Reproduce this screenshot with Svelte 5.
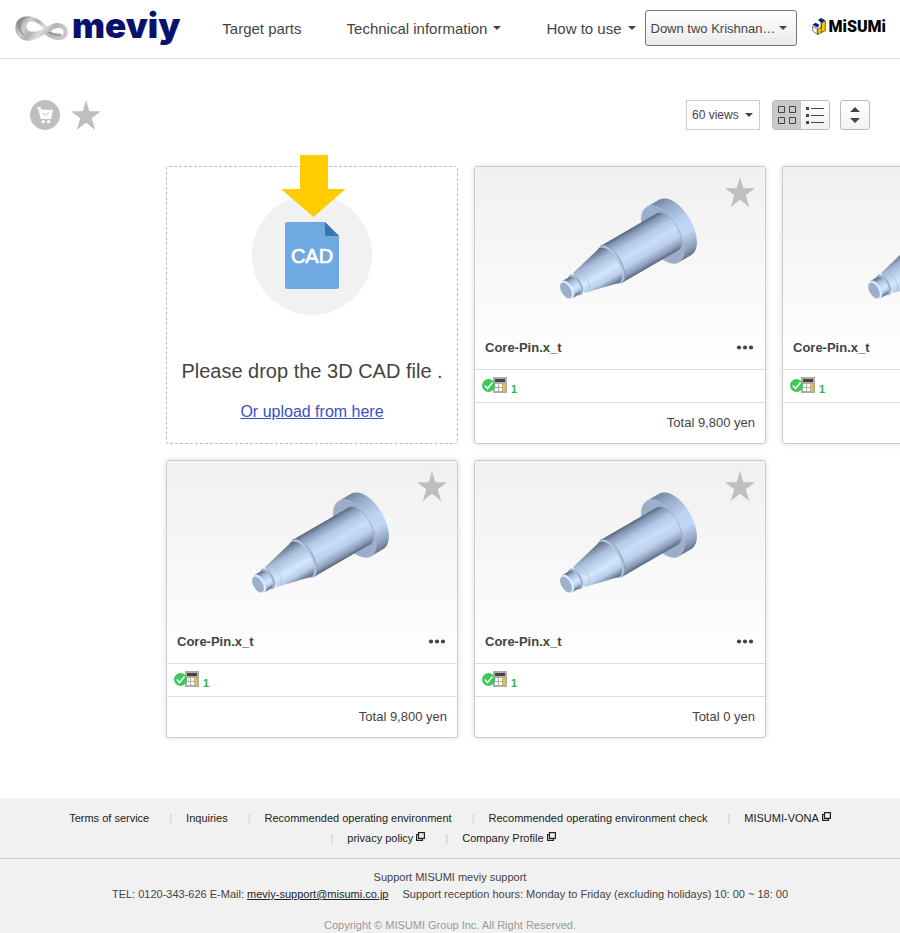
<script>
  const projects = [
    { name: 'Core-Pin.x_t', quotes: 1, total: '9,800' },
    { name: 'Core-Pin.x_t', quotes: 1, total: '9,800' },
    { name: 'Core-Pin.x_t', quotes: 1, total: '9,800' },
    { name: 'Core-Pin.x_t', quotes: 1, total: '0' }
  ];

  const footerLinks = [
    { label: 'Terms of service' },
    { label: 'Inquiries' },
    { label: 'Recommended operating environment' },
    { label: 'Recommended operating environment check' },
    { label: 'MISUMI-VONA', external: true },
    { label: 'privacy policy', external: true },
    { label: 'Company Profile', external: true }
  ];

  let view = $state('grid');
</script>

{#snippet star()}
  <svg class="star" viewBox="213 60 90 90" aria-hidden="true">
    <path fill="#bfbfbf" d="M258 60L268 94H303L275 115L286 150L258 128L230 150L241 115L213 94H248Z" />
  </svg>
{/snippet}

{#snippet pin()}
  <svg class="pin" viewBox="258 102 432 324" role="img" aria-label="3D model preview">
    <defs>
      <linearGradient id="shaft" x1="0" y1="0" x2="0" y2="1">
        <stop offset="0" stop-color="#56657c" />
        <stop offset=".1" stop-color="#8296b4" />
        <stop offset=".3" stop-color="#b3c8e8" />
        <stop offset=".52" stop-color="#c8dcfb" />
        <stop offset=".72" stop-color="#bdd1ef" />
        <stop offset=".9" stop-color="#8b9dba" />
        <stop offset="1" stop-color="#59677c" />
      </linearGradient>
      <linearGradient id="cone" x1="0" y1="0" x2="0" y2="1">
        <stop offset="0" stop-color="#59687e" />
        <stop offset=".25" stop-color="#a6bbd8" />
        <stop offset=".6" stop-color="#d3e8ff" />
        <stop offset=".8" stop-color="#b8cde9" />
        <stop offset="1" stop-color="#58667b" />
      </linearGradient>
      <linearGradient id="flange" x1="0" y1="0" x2="0" y2="1">
        <stop offset="0" stop-color="#75869f" />
        <stop offset=".15" stop-color="#94a8c6" />
        <stop offset=".45" stop-color="#bdd2f3" />
        <stop offset=".65" stop-color="#c2d7f8" />
        <stop offset=".88" stop-color="#8fa2bf" />
        <stop offset="1" stop-color="#65748b" />
      </linearGradient>
    </defs>
    <g transform="translate(578 221) rotate(-30)">
      <path fill="url(#flange)" d="M0 -96H44A50 96 0 0 1 44 96H0Z" />
      <ellipse rx="50" ry="96" fill="#9badc8" stroke="#b4c5dc" stroke-width="1.5" />
      <path fill="url(#shaft)" d="M-180 -64H16A32 64 0 0 1 16 64H-180Z" />
      <ellipse cx="-180" rx="32" ry="64" fill="#b3c5df" />
      <path fill="none" stroke="#8493aa" stroke-width="2" d="M-180 -64A32 64 0 0 1 -180 64" />
      <path fill="url(#cone)" d="M-290 -35L-185 -60A29 60 0 0 1 -185 60L-290 35Z" />
      <path fill="none" stroke="#a5b4c9" stroke-width="1.5" d="M-280 -36A17 36 0 0 1 -280 36" />
      <ellipse cx="-303" rx="17" ry="34" fill="#a9bcd7" />
      <path fill="none" stroke="#8897ad" stroke-width="2" d="M-303 -34A17 34 0 0 1 -303 34" />
      <path fill="url(#cone)" d="M-330 -30H-306A15 30 0 0 1 -306 30H-330Z" />
      <ellipse cx="-330" rx="16" ry="30" fill="#d9ebff" />
      <ellipse cx="-335" rx="14" ry="26" fill="#9db0cb" />
    </g>
  </svg>
{/snippet}

<header>
  <a class="brand" href="#home" aria-label="meviy home">
    <svg width="53" height="27" viewBox="44 42 160 80" aria-hidden="true">
      <defs>
        <linearGradient id="silver" x1="0" y1="0" x2="1" y2=".35">
          <stop offset="0" stop-color="#8a8589" />
          <stop offset=".14" stop-color="#a8a3a7" />
          <stop offset=".3" stop-color="#d0cdcf" />
          <stop offset=".46" stop-color="#b2adb1" />
          <stop offset=".62" stop-color="#dedbdd" />
          <stop offset=".8" stop-color="#b5b1b4" />
          <stop offset="1" stop-color="#c9c6c8" />
        </linearGradient>
      </defs>
      <path fill="url(#silver)" fill-rule="evenodd" d="M45 80C45 56 62 44 84 45C108 46 124 60 142 77C153 69 166 64 178 66C195 69 204 80 203 95C202 110 190 118 175 117C158 116 146 107 133 99C112 112 98 120 80 119C58 117 45 101 45 80ZM90 60C74 66 76 88 91 91C105 94 119 89 131 82C118 69 106 58 90 60ZM151 91C158 96 168 98 176 97C183 96 187 101 182 105C189 101 193 94 189 87C180 76 163 81 151 91Z" />
      <path fill="#6f6a6e" opacity=".45" d="M52 62C60 49 74 45 92 47C72 49 62 60 62 76C62 90 68 99 76 104C58 99 47 80 52 62Z" />
      <path fill="#6f6a6e" opacity=".4" d="M151 91C161 97 172 97 178 97L186 105C174 109 156 102 142 93Z" />
    </svg>
    <span>meviy</span>
  </a>
  <nav>
    <a href="#parts">Target parts</a>
    <button type="button">Technical information<i class="caret"></i></button>
    <button type="button">How to use<i class="caret"></i></button>
  </nav>
  <button type="button" class="user"><span>Down two Krishnan…</span><i class="caret"></i></button>
  <a class="misumi" href="#misumi" aria-label="MISUMI">
    <svg width="14" height="17" viewBox="545 53 42 51" aria-hidden="true">
      <path fill="#fff" stroke="#333" stroke-width="2" d="M547 78L561 86V102L547 92Z" />
      <path fill="#fecb00" stroke="#222" stroke-width="2" d="M562 86L573 80V68L585 62V91L562 102Z" />
      <path fill="#0b1d86" d="M546 73L556 67L567 73L562 82ZM563 59L572 53L585 60L573 68Z" />
      <path fill="none" stroke="#222" stroke-width="2" d="M573 68V95" />
    </svg>
    <span>MiSUMi</span>
  </a>
</header>

<main>
  <div class="toolbar">
    <button type="button" class="plain" aria-label="Cart">
      <svg width="30" height="30" viewBox="90 60 90 90" aria-hidden="true">
        <circle cx="135" cy="105" r="45" fill="#bfbfbf" />
        <path fill="#fff" d="M111 81H121L124 89H159L153 117H122L115 86H111Z" />
        <circle cx="130" cy="125" r="5" fill="#fff" />
        <circle cx="146" cy="125" r="5" fill="#fff" />
        <path fill="none" stroke="#bfbfbf" stroke-width="3" d="M129 99L136 107L148 96" />
      </svg>
    </button>
    <button type="button" class="plain" aria-label="Favorites">{@render star()}</button>
    <div class="select">
      <select aria-label="Items per page">
        <option>60 views</option>
        <option>120 views</option>
      </select>
      <i class="caret"></i>
    </div>
    <div class="toggle">
      <button type="button" class:on={view === 'grid'} aria-label="Grid view" onclick={() => (view = 'grid')}>
        <svg width="20" height="20" viewBox="0 0 20 20" fill="none" stroke="#444" aria-hidden="true">
          <path d="M1.5 1.5H7.5V7.5H1.5ZM12.5 1.5H18.5V7.5H12.5ZM1.5 12.5H7.5V18.5H1.5ZM12.5 12.5H18.5V18.5H12.5Z" />
        </svg>
      </button>
      <button type="button" class:on={view === 'list'} aria-label="List view" onclick={() => (view = 'list')}>
        <svg width="20" height="20" viewBox="0 0 20 20" fill="#444" aria-hidden="true">
          <path d="M1 2H4V5H1ZM6 3H19V4H6ZM1 9H4V12H1ZM6 10H19V11H6ZM1 16H4V19H1ZM6 17H19V18H6Z" />
        </svg>
      </button>
    </div>
    <button type="button" class="sort" aria-label="Sort">
      <svg width="10" height="16" viewBox="0 0 10 16" fill="#444" aria-hidden="true">
        <path d="M0 5L5 0L10 5ZM0 11L5 16L10 11Z" />
      </svg>
    </button>
  </div>

  <div class="grid">
    <section class="drop">
      <svg width="120" height="160" viewBox="252 155 120 160" aria-hidden="true">
        <circle cx="312" cy="255" r="60" fill="#f1f1f1" />
        <path fill="#ffcc00" d="M300 155H328V189H345.5L313.500 217L281 189H300Z" />
        <path fill="#6fa9e2" d="M287 222H325L339 236V287A2 2 0 0 1 337 289H287A2 2 0 0 1 285 287V224A2 2 0 0 1 287 222Z" />
        <path fill="#3a74ad" d="M325 222L339 236H327A2 2 0 0 1 325 234Z" />
        <text x="312" y="263" text-anchor="middle" font-size="20" fill="#fff" stroke="#fff" stroke-width=".7">CAD</text>
      </svg>
      <h1>Please drop the 3D CAD file .</h1>
      <a href="#upload">Or upload from here</a>
    </section>

    {#each projects as project}
      <article>
        <div class="preview">
          {@render pin()}
          <button type="button" class="plain fav" aria-label="Add to favorites">{@render star()}</button>
          <div class="title">
            <h2>{project.name}</h2>
            <button type="button" class="plain" aria-label="More">
              <svg width="18" height="6" viewBox="0 0 18 6" fill="#444" aria-hidden="true">
                <circle cx="3" cy="3.500" r="2.100" /><circle cx="9" cy="3.500" r="2.100" /><circle cx="15" cy="3.500" r="2.100" />
              </svg>
            </button>
          </div>
        </div>
        <div class="status">
          <svg width="26" height="16" viewBox="0 0 26 16" aria-hidden="true">
            <path fill="#b1aca6" d="M11 0H25V16H11Z" />
            <path fill="#444" d="M13 2H23V5H13Z" />
            <path fill="#fff" d="M13 7H16V10H13ZM17 7H20V10H17ZM13 11H16V14H13ZM17 11H20V14H17Z" />
            <path fill="#f9c31b" d="M21 7H23V14H21Z" />
            <circle cx="6.500" cy="8.500" r="6.500" fill="#3dc955" />
            <path fill="none" stroke="#fff" stroke-width="1.500" d="M2.800 8.500L5.500 11.500L10.500 5.500" />
          </svg>
          <span>{project.quotes}</span>
        </div>
        <div class="total">Total {project.total} yen</div>
      </article>
    {/each}
  </div>
</main>

<footer>
  <ul>
    {#each footerLinks as link}
      <li>
        <a href="#footer">{link.label}</a>
        {#if link.external}
          <svg width="9" height="9" viewBox="0 0 9 9" fill="none" stroke="#222" stroke-width="1.200" aria-hidden="true">
            <path d="M2.500 .6H8.400V6.400H2.500ZM2.500 2.500H.6V8.400H6.400V6.400" />
          </svg>
        {/if}
      </li>
    {/each}
  </ul>
  <div class="support">
    <p>Support MISUMI meviy support</p>
    <p>
      TEL: 0120-343-626 E-Mail: <a href="mailto:meviy-support@misumi.co.jp">meviy-support@misumi.co.jp</a>
      <span>Support reception hours: Monday to Friday (excluding holidays) 10: 00 ~ 18: 00</span>
    </p>
    <small>Copyright © MISUMI Group Inc. All Right Reserved.</small>
  </div>
</footer>

<style>
  :global(body) {
    margin: 0;
    background: #fff;
    color: #444;
    font-family: 'Liberation Sans', Arial, sans-serif;
    font-size: 13px;
  }

  header, header *, main *, footer, footer * {
    box-sizing: border-box;
  }

  button, select {
    font: inherit;
    color: inherit;
    cursor: pointer;
  }

  svg {
    display: block;
    flex: none;
  }

  .plain {
    padding: 0;
    border: 0;
    background: none;
  }

  .caret {
    flex: none;
    border: 4px solid transparent;
    border-top-color: #444;
    border-bottom: 0;
  }

  .star {
    width: 30px;
    height: 30px;
  }

  header {
    display: flex;
    align-items: center;
    height: 59px;
    padding: 0 14px 2px 15px;
    border-bottom: 1px solid #ddd;
  }

  .brand {
    display: flex;
    align-items: center;
    gap: 4px;
    color: #06126b;
    text-decoration: none;
  }

  .brand span {
    padding-bottom: 6px;
    font: 900 35px/40px Inter, sans-serif;
  }

  nav {
    display: flex;
    flex: 1;
    justify-content: flex-end;
    gap: 45px;
    margin-right: 9px;
    font-size: 15px;
    white-space: nowrap;
  }

  nav a {
    color: inherit;
    text-decoration: none;
  }

  nav button {
    display: flex;
    align-items: center;
    gap: 6px;
    padding: 0;
    border: 0;
    background: none;
  }

  .user {
    display: flex;
    align-items: center;
    justify-content: space-between;
    width: 152px;
    height: 36px;
    padding: 0 9px 0 5px;
    border: 1px solid #777;
    border-radius: 3px;
    background: linear-gradient(#fff, #ebebeb);
    white-space: nowrap;
  }

  .misumi {
    display: flex;
    align-items: center;
    gap: 3px;
    margin-left: 15px;
    padding-bottom: 3px;
    color: #000;
    text-decoration: none;
  }

  .misumi span {
    font: 900 16px/20px Roboto, sans-serif;
  }

  main {
    padding: 41px 0 60px;
    overflow: hidden;
  }

  .toolbar {
    display: flex;
    align-items: center;
    padding: 0 30px;
  }

  .toolbar > .plain + .plain {
    margin-left: 11px;
  }

  .select {
    display: flex;
    align-items: center;
    position: relative;
    margin-left: auto;
  }

  select {
    width: 74px;
    height: 30px;
    padding: 0 5px;
    border: 1px solid #ccc;
    border-radius: 0;
    background: #fff;
    appearance: none;
    font-size: 12px;
  }

  .select .caret {
    position: absolute;
    right: 7px;
    pointer-events: none;
  }

  .toggle {
    display: flex;
    width: 58px;
    height: 30px;
    margin: 0 10px 0 12px;
    border: 1px solid #bbb;
    border-radius: 3px;
    overflow: hidden;
  }

  .toggle button {
    display: flex;
    flex: 1;
    align-items: center;
    justify-content: center;
    padding: 0;
    border: 0;
    background: linear-gradient(#fff, #f1f1f1);
  }

  .toggle .on {
    background: #c9c9c9;
  }

  .sort {
    display: flex;
    align-items: center;
    justify-content: center;
    width: 30px;
    height: 30px;
    padding: 0;
    border: 1px solid #bbb;
    border-radius: 3px;
    background: linear-gradient(#fff, #f1f1f1);
  }

  .grid {
    display: grid;
    grid-template-columns: repeat(3, 292px);
    grid-auto-rows: 278px;
    gap: 16px;
    margin: 36px 0 0 166px;
  }

  .drop {
    display: flex;
    flex-direction: column;
    align-items: center;
    border: 1px dashed #bbb;
    border-radius: 3px;
  }

  .drop svg {
    margin-top: -12px;
    overflow: visible;
  }

  .drop h1 {
    margin: 44px 0 19px;
    font-size: 20px;
    font-weight: 400;
    line-height: 24px;
  }

  .drop a {
    color: #3a4ec8;
    font-size: 16px;
    line-height: 20px;
  }

  article {
    display: flex;
    flex-direction: column;
    border: 1px solid #ccc;
    border-radius: 3px;
    background: #fff;
    box-shadow: 0 0 6px rgba(0, 0, 0, 0.14);
  }

  .preview {
    display: flex;
    flex: 1;
    flex-direction: column;
    align-items: center;
    position: relative;
    padding-top: 28px;
    background: linear-gradient(#f0f0f0, #fff);
    border-radius: 2px 2px 0 0;
  }

  .pin {
    width: 144px;
    height: 108px;
    margin-left: 16px;
  }

  .fav {
    position: absolute;
    top: 10px;
    right: 10px;
  }

  .title {
    display: flex;
    align-items: center;
    justify-content: space-between;
    align-self: stretch;
    height: 44px;
    margin-top: auto;
    padding: 0 11px 0 10px;
  }

  h2 {
    margin: 0;
    font-size: 13px;
  }

  .status {
    display: flex;
    align-items: center;
    gap: 3px;
    height: 33px;
    padding: 0 0 2px 7px;
    border-top: 1px solid #ddd;
  }

  .status span {
    padding-top: 8px;
    color: #37b34a;
    font-size: 11px;
    font-weight: 700;
  }

  .total {
    height: 41px;
    padding-right: 10px;
    border-top: 1px solid #ddd;
    line-height: 40px;
    text-align: right;
  }

  footer {
    background: #f1f1f1;
    font-size: 11px;
  }

  ul {
    display: flex;
    flex-wrap: wrap;
    justify-content: center;
    margin: 0;
    padding: 10px 0;
    border-bottom: 1px solid #ccc;
    list-style: none;
    line-height: 20px;
  }

  li {
    display: flex;
    gap: 3px;
    padding: 0 17px 0 3px;
  }

  li svg {
    margin-top: 4px;
  }

  li:first-child {
    padding-left: 17px;
  }

  li + li::before {
    content: '|';
    margin-right: 11px;
    color: #ccc;
  }

  footer a {
    color: #222;
  }

  li a {
    text-decoration: none;
  }

  .support {
    padding-top: 10px;
    line-height: 17px;
    text-align: center;
  }

  p {
    margin: 0;
  }

  p span {
    margin-left: 11px;
  }

  small {
    display: block;
    margin-top: 14px;
    color: #999;
    font-size: 11px;
  }
</style>
